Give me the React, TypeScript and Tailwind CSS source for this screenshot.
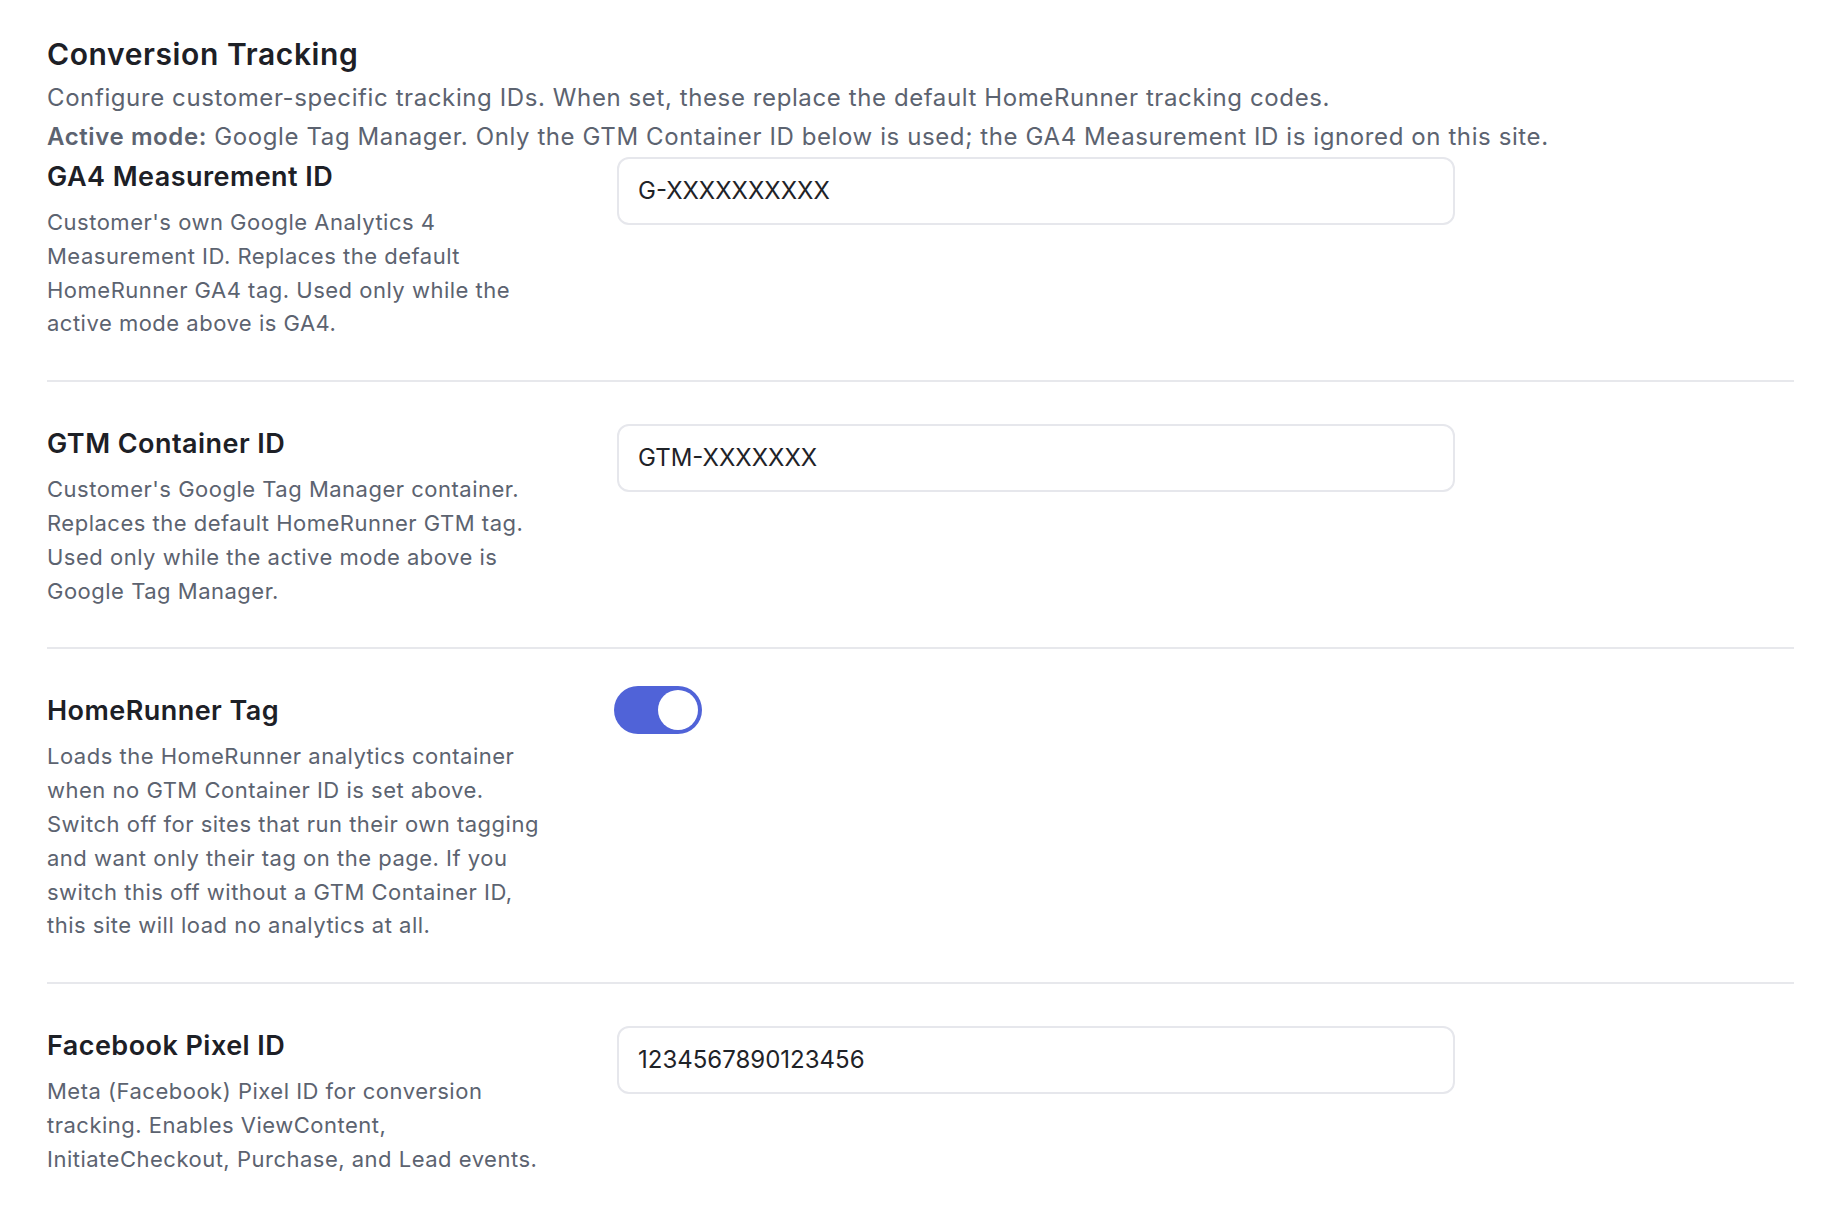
import React from "react";

const font = { fontFamily: "Inter, 'Noto Sans', sans-serif" };

function Row({
  label,
  desc,
  first,
  children,
}: {
  label: string;
  desc: string;
  first?: boolean;
  children: React.ReactNode;
}) {
  return (
    <div className={`flex ${first ? "pt-0" : "pt-[42px] border-t-2 border-[#e7e8ec]"} pb-[39px]`}>
      <div className="w-[570px] shrink-0 pr-[64px]">
        <div className="text-[27px] leading-[40px] font-semibold text-[#1d2026] tracking-[0.45px]">{label}</div>
        <p className="mt-[9px] text-[22px] leading-[33.8px] text-[#5c6370] tracking-[0.5px]">{desc}</p>
      </div>
      <div className="w-[838px]">{children}</div>
    </div>
  );
}

function Input({ value }: { value: string }) {
  return (
    <div className="h-[68px] rounded-[12px] border-2 border-[#e6e7ec] flex items-center px-[19px] text-[24px] text-[#1f2328] bg-white">
      {value}
    </div>
  );
}

export default function App() {
  return (
    <div className="min-h-[1226px] bg-white px-[47px] pt-[34px]" style={font}>
      <div className="w-[1747px]">
        <h1 className="text-[30px] leading-[40px] font-semibold text-[#1d2026] tracking-[0.6px] mb-[4px]">
          Conversion Tracking
        </h1>
        <p className="text-[24px] leading-[39px] text-[#5c6370] tracking-[0.6px]">
          Configure customer-specific tracking IDs. When set, these replace the default HomeRunner tracking codes.
        </p>
        <p className="text-[24px] leading-[39px] text-[#5c6370] tracking-[0.6px]">
          <span className="font-semibold">Active mode:</span> Google Tag Manager. Only the GTM Container ID below is
          used; the GA4 Measurement ID is ignored on this site.
        </p>
        <div className="mt-[1px]">
          <Row
            first
            label="GA4 Measurement ID"
            desc="Customer's own Google Analytics 4 Measurement ID. Replaces the default HomeRunner GA4 tag. Used only while the active mode above is GA4."
          >
            <Input value="G-XXXXXXXXXX" />
          </Row>
          <Row
            label="GTM Container ID"
            desc="Customer's Google Tag Manager container. Replaces the default HomeRunner GTM tag. Used only while the active mode above is Google Tag Manager."
          >
            <Input value="GTM-XXXXXXX" />
          </Row>
          <Row
            label="HomeRunner Tag"
            desc="Loads the HomeRunner analytics container when no GTM Container ID is set above. Switch off for sites that run their own tagging and want only their tag on the page. If you switch this off without a GTM Container ID, this site will load no analytics at all."
          >
            <button
              type="button"
              role="switch"
              aria-checked="true"
              className="-ml-[3px] -mt-[5px] w-[88px] h-[48px] rounded-full bg-[#5063d8] p-[4px] flex justify-end items-center"
            >
              <span className="block w-[40px] h-[40px] rounded-full bg-white" />
            </button>
          </Row>
          <Row
            label="Facebook Pixel ID"
            desc="Meta (Facebook) Pixel ID for conversion tracking. Enables ViewContent, InitiateCheckout, Purchase, and Lead events."
          >
            <Input value="1234567890123456" />
          </Row>
        </div>
      </div>
    </div>
  );
}
